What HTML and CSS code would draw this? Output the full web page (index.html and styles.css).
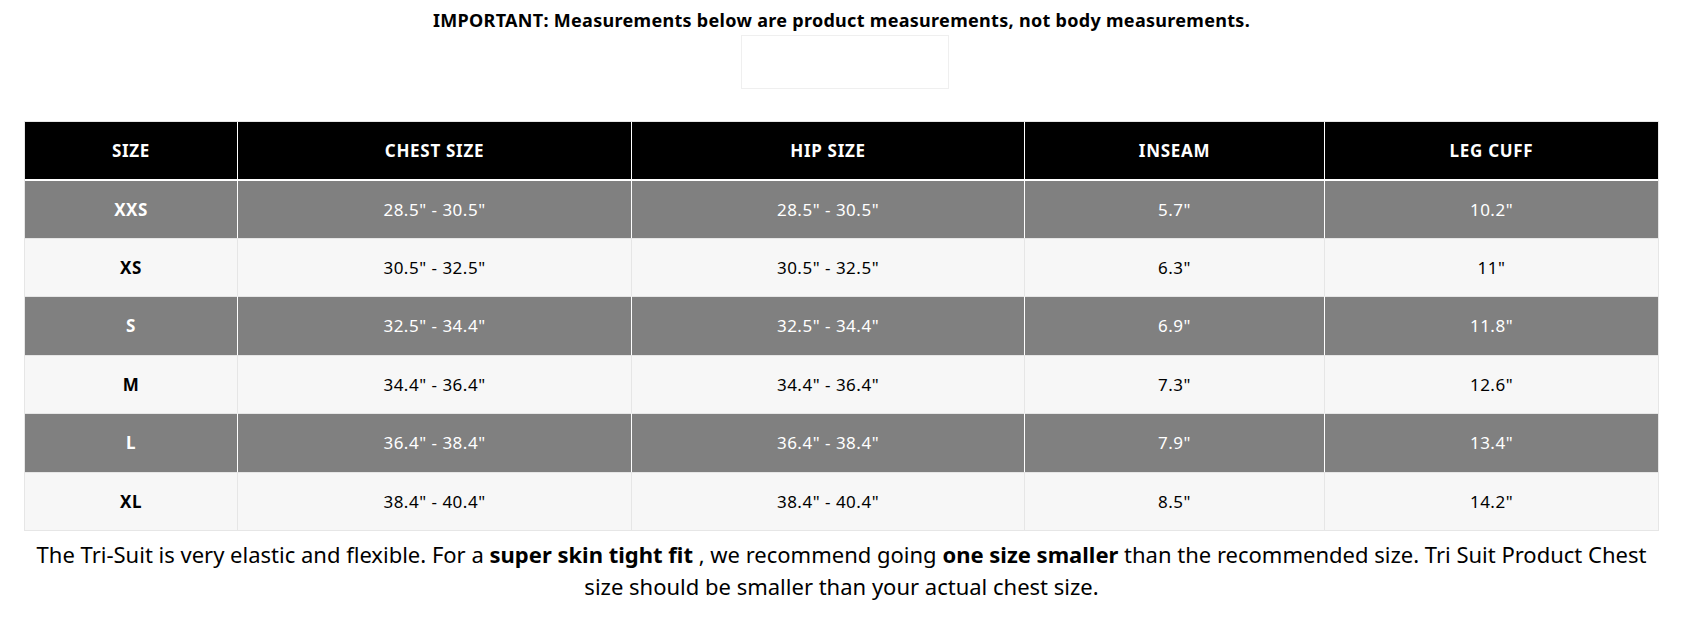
FILE: index.html
```html
<!DOCTYPE html>
<html lang="en">
<head>
<meta charset="utf-8">
<title>Tri-Suit Size Chart</title>
<link rel="stylesheet" href="styles.css">
</head>
<body>
<div class="page">
  <p class="notice">IMPORTANT: Measurements below are product measurements, not body measurements.</p>
  <div class="placeholder"></div>
  <table class="chart">
    <colgroup>
      <col class="c-size"><col class="c-chest"><col class="c-hip"><col class="c-inseam"><col class="c-cuff">
    </colgroup>
    <thead>
      <tr><th>SIZE</th><th>CHEST SIZE</th><th>HIP SIZE</th><th>INSEAM</th><th>LEG CUFF</th></tr>
    </thead>
    <tbody>
      <tr class="dark"><td class="size">XXS</td><td>28.5" - 30.5"</td><td>28.5" - 30.5"</td><td>5.7"</td><td>10.2"</td></tr>
      <tr class="light"><td class="size">XS</td><td>30.5" - 32.5"</td><td>30.5" - 32.5"</td><td>6.3"</td><td>11"</td></tr>
      <tr class="dark"><td class="size">S</td><td>32.5" - 34.4"</td><td>32.5" - 34.4"</td><td>6.9"</td><td>11.8"</td></tr>
      <tr class="light"><td class="size">M</td><td>34.4" - 36.4"</td><td>34.4" - 36.4"</td><td>7.3"</td><td>12.6"</td></tr>
      <tr class="dark"><td class="size">L</td><td>36.4" - 38.4"</td><td>36.4" - 38.4"</td><td>7.9"</td><td>13.4"</td></tr>
      <tr class="light"><td class="size">XL</td><td>38.4" - 40.4"</td><td>38.4" - 40.4"</td><td>8.5"</td><td>14.2"</td></tr>
    </tbody>
  </table>
  <p class="note">The Tri-Suit is very elastic and flexible. For a <strong>super skin tight fit</strong> , we recommend going <strong>one size smaller</strong> than the recommended size. Tri Suit Product Chest size should be smaller than your actual chest size.</p>
</div>
</body>
</html>
```
FILE: styles.css
```css
html, body {
  margin: 0;
  padding: 0;
  background: #fff;
}
body {
  font-family: "Noto Sans", "DejaVu Sans", sans-serif;
  color: #000;
}
.page {
  padding: 0 23px 0 24px;
}
.notice {
  margin: 0;
  padding-top: 8px;
  font-size: 18px;
  line-height: 24px;
  font-weight: 700;
  letter-spacing: 0.3px;
  text-align: center;
}
.placeholder {
  width: 208px;
  height: 54px;
  box-sizing: border-box;
  border: 1px solid #efefef;
  margin: 3px 0 0 calc(50% - 101px);
}
.chart {
  width: 100%;
  margin-top: 32px;
  border-collapse: separate;
  border-spacing: 0;
  border: 1px solid #e6e6e6;
  table-layout: fixed;
  font-size: 17px;
  letter-spacing: 0.5px;
  text-align: center;
}
.c-size { width: 213px; }
.c-chest { width: 394px; }
.c-hip { width: 393px; }
.c-inseam { width: 300px; }
.chart th {
  background: #000;
  color: #fff;
  font-weight: 700;
  letter-spacing: 0.7px;
  height: 57px;
  padding: 0;
  border-right: 1px solid #fff;
}
.chart td {
  height: 57.5px;
  padding: 0;
  border-top: 1px solid #e6e6e6;
  border-right: 1px solid #e6e6e6;
}
.chart th:last-child,
.chart td:last-child {
  border-right: none;
}
.chart tr.dark td {
  background: #808080;
  color: #fff;
  border-right-color: #fff;
}
.chart tbody tr:first-child td {
  border-top: 2px solid #fff;
  height: 56.5px;
}
.chart tr.light td {
  background: #f7f7f7;
  color: #000;
}
.chart td.size {
  font-weight: 700;
}
.note {
  margin: 7px 0 0;
  font-size: 22px;
  line-height: 32px;
  text-align: center;
}
.note strong {
  font-weight: 700;
}
```
